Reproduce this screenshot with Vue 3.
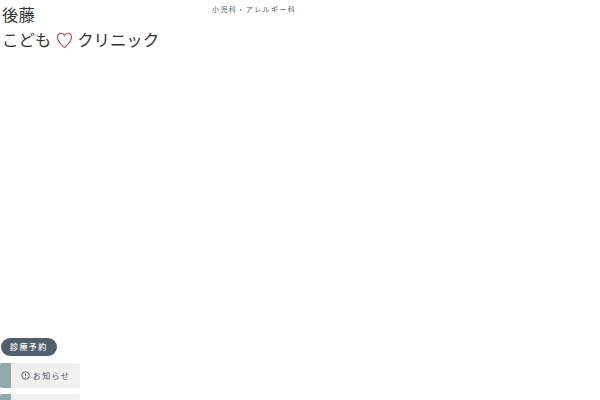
<script setup>
const items = [
  { id: 1, label: 'お知らせ', icon: true },
  { id: 2, label: '', icon: false },
]
</script>

<template>
  <div class="page">
    <header class="header">
      <h1 class="title">
        <span class="line">後藤</span>
        <span class="line">こども<svg class="heart" viewBox="1.600 1.600 16.800 17.400" width="15" height="17" aria-hidden="true">
            <path d="M10 18.2C7 15.2 2.200 11.400 2.200 6.800C2.200 4 4.200 2.200 6.400 2.200C8 2.200 9.300 3.200 10 4.800C10.700 3.200 12 2.200 13.600 2.200C15.800 2.200 17.800 4 17.800 6.800C17.800 11.400 13 15.200 10 18.200Z" fill="none" stroke="#c2464f" stroke-width="1.200" />
          </svg>クリニック</span>
      </h1>
      <p class="sub">小児科・アレルギー科</p>
    </header>
    <nav class="nav">
      <a class="reserve">診療予約</a>
      <a v-for="item in items" :key="item.id" class="tab">
        <span class="bar"></span>
        <span class="tab-body">
          <svg v-if="item.icon" class="info" viewBox="0 0 10 10" width="9" height="9" aria-hidden="true">
            <circle cx="5" cy="5" r="4.200" fill="none" stroke="#3c4853" stroke-width="0.900" />
            <path d="M5 2.600V5.600M5 6.700V7.500" fill="none" stroke="#3c4853" stroke-width="1" />
          </svg>
          <span>{{ item.label }}</span>
        </span>
      </a>
    </nav>
  </div>
</template>

<style>
html, body { margin: 0; background: #fff; overflow: hidden; }
</style>

<style scoped>
.page {
  width: 600px;
  height: 400px;
  overflow: hidden;
  display: flex;
  flex-direction: column;
  justify-content: space-between;
  font-family: "Noto Sans CJK JP", "Noto Sans", sans-serif;
  color: #333;
}
.header {
  display: flex;
  align-items: flex-start;
  padding-left: 2px;
}
.title {
  margin: 2px 0 0;
  font-size: 16.400px;
  font-weight: 400;
  line-height: 25px;
  width: 210px;
  flex: none;
}
.line { display: block; white-space: nowrap; }
.heart { vertical-align: -3px; margin: 0 5px 0 6px; }
.sub {
  margin: 4px 0 0;
  font-size: 7px;
  letter-spacing: 1.430px;
  line-height: 11px;
  color: #55606a;
}
.nav {
  display: flex;
  flex-direction: column;
  align-items: flex-start;
  gap: 6px;
  padding-left: 1px;
  margin-bottom: -19px;
}
.reserve {
  background: #52606e;
  color: #fff;
  font-size: 8px;
  font-weight: 500;
  letter-spacing: 1.400px;
  line-height: 18px;
  padding: 0 9px;
  margin-bottom: 1px;
  border-radius: 9px;
}
.tab {
  display: flex;
  width: 80px;
  height: 25px;
  margin-left: -1px;
  border-radius: 2px;
  overflow: hidden;
  background: #f0f0ee;
}
.bar { width: 11px; background: #91a9a8; flex: none; }
.tab-body {
  flex: 1;
  display: flex;
  align-items: center;
  justify-content: center;
  gap: 3px;
  font-size: 8px;
  letter-spacing: 1.400px;
  color: #44505c;
}
.info { flex: none; }
</style>
